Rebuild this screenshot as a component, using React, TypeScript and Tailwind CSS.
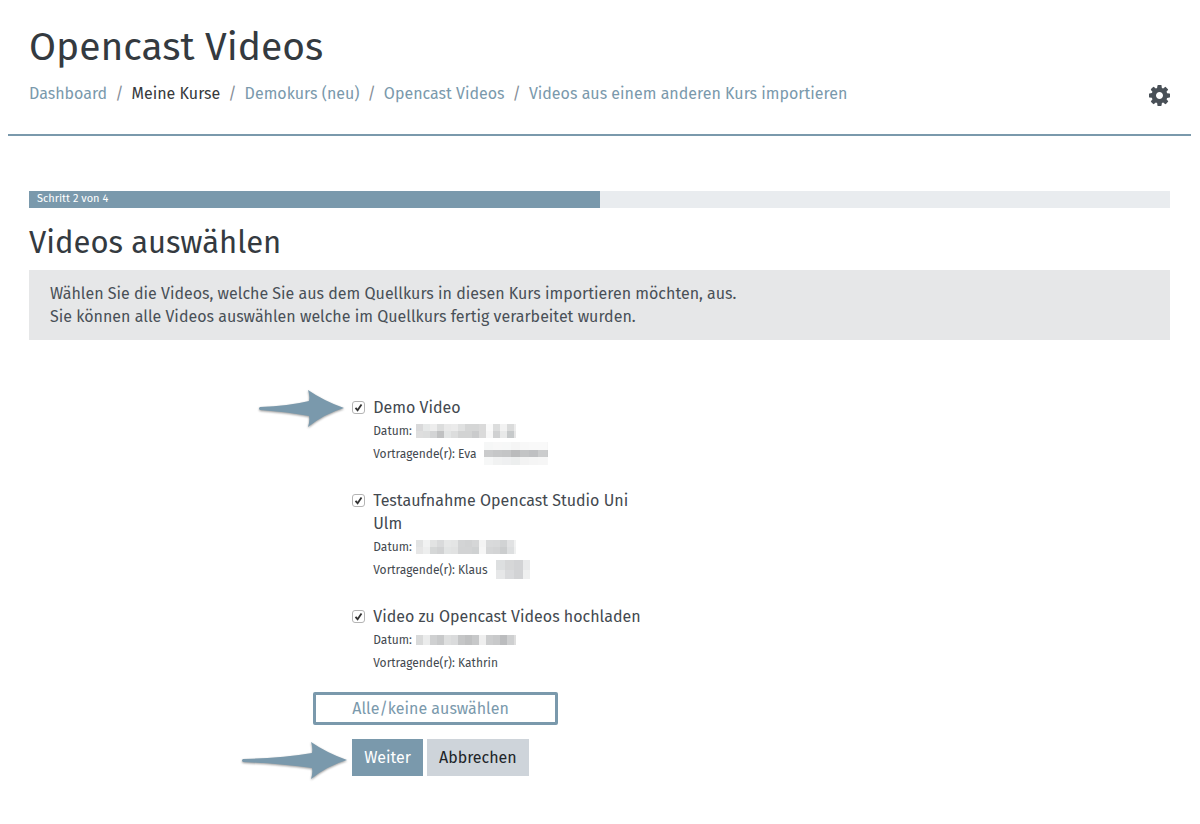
import { useState } from "react"

interface Mosaic {
  width: number
  height: number
  cell: number
  rows: string[][]
}

interface Video {
  id: string
  title: string
  presenter: string
  date: Mosaic
  surname?: Mosaic
}

const videos: Video[] = [
  {
    id: "demo",
    title: "Demo Video",
    presenter: "Eva",
    date: {
      width: 100,
      height: 14,
      cell: 7,
      rows: [
        ["#d9d9da", "#e6e8e8", "#ededed", "#dcdddd", "#e9e9e9", "#ebebeb", "#e0e1e1", "#d5d6d6", "#d5d6d6", "#dadada", "#fafafa", "#dcdddd", "#f2f2f2", "#dadbdb", "#ececec"],
        ["#dedede", "#dcdddd", "#d3d4d5", "#c0c1c2", "#e3e5e5", "#dcdddd", "#d2d3d3", "#d2d3d3", "#cacbcc", "#dadada", "#f7f7f7", "#d0d1d2", "#e8e9e9", "#c6c9ca", "#e6e6e6"],
      ],
    },
    surname: {
      width: 64,
      height: 23,
      cell: 9,
      rows: [
        ["#f6f7f7", "#f8f8f8", "#f7f8f8", "#f5f5f5", "#f8f8f8", "#f9f9f9", "#f9f9f9", "#f6f6f6"],
        ["#cacbcc", "#c6c7c8", "#c4c5c6", "#babbbc", "#c3c4c5", "#bfc0c2", "#cbcccd", "#c8c9ca"],
        ["#f6f7f7", "#f1f2f2", "#eff0f1", "#eceeee", "#f3f3f3", "#f5f5f5", "#f6f6f6", "#f7f7f7"],
      ],
    },
  },
  {
    id: "testaufnahme",
    title: "Testaufnahme Opencast Studio Uni Ulm",
    presenter: "Klaus",
    date: {
      width: 100,
      height: 14,
      cell: 7,
      rows: [
        ["#e2e3e3", "#f1f2f2", "#e2e3e3", "#d9dadb", "#e6e7e7", "#e4e5e5", "#d3d4d5", "#d1d2d3", "#d5d6d7", "#f4f4f4", "#d9dadb", "#d8d9da", "#d1d3d4", "#e1e2e3", "#f1f2f2"],
        ["#e6e6e6", "#edeeee", "#d5d7d7", "#d1d2d3", "#e2e4e4", "#e1e2e2", "#d2d3d4", "#d2d3d4", "#cfd1d2", "#f6f6f6", "#d5d6d7", "#d3d4d5", "#cbcdce", "#dddfe0", "#eff0f0"],
      ],
    },
    surname: {
      width: 34,
      height: 19,
      cell: 9,
      rows: [
        ["#dddfe0", "#d6d7d8", "#d2d3d5", "#e9eaeb"],
        ["#e6e7e8", "#d9dadc", "#d2d3d5", "#eff0f0"],
      ],
    },
  },
  {
    id: "hochladen",
    title: "Video zu Opencast Videos hochladen",
    presenter: "Kathrin",
    date: {
      width: 100,
      height: 10,
      cell: 7,
      rows: [
        ["#d9dada", "#ebecec", "#cfd0d1", "#c8c9ca", "#dedfdf", "#dadbdc", "#c5c6c7", "#bfc0c1", "#c7c8c9", "#efefef", "#cccdce", "#c8c9ca", "#bbbcbe", "#cecfd0", "#dedede"],
      ],
    },
  },
]

const crumbs = [
  { label: "Dashboard", link: true },
  { label: "Meine Kurse", link: false },
  { label: "Demokurs (neu)", link: true },
  { label: "Opencast Videos", link: true },
  { label: "Videos aus einem anderen Kurs importieren", link: true },
]

function Redacted({ mosaic }: { mosaic: Mosaic }) {
  const rowHeight = mosaic.height / mosaic.rows.length
  return (
    <svg width={mosaic.width} height={mosaic.height} aria-hidden="true" className="shrink-0" shapeRendering="crispEdges">
      {mosaic.rows.map((row, y) =>
        row.map((fill, x) => (
          <rect key={`${x}-${y}`} x={x * mosaic.cell} y={y * rowHeight} width={mosaic.cell} height={rowHeight} fill={fill} />
        ))
      )}
    </svg>
  )
}

// The head keeps its size, only the tail grows with the length
function Arrow({ length, className }: { length: number; className: string }) {
  const neck = length - 36
  const tail = neck * 0.6
  return (
    <svg width={length} height={37} aria-hidden="true" className={`pointer-events-none absolute overflow-visible drop-shadow-[0_1px_1px_rgba(0,0,0,0.4)] ${className}`}>
      <path
        d={`M1 17 Q${tail} 16 ${neck + 1} 11 Q${neck + 2} 6 ${neck} 0 Q${neck + 16} 11 ${length} 18 Q${neck + 16} 24 ${neck} 37 Q${neck + 2} 31 ${neck + 1} 26 Q${tail} 22 1 20 Q-1 18.500 1 17Z`}
        fill="#7a99ac"
      />
    </svg>
  )
}

function GearIcon() {
  return (
    <svg viewBox="0 0 1536 1536" className="size-[21px]" fill="#495057" aria-hidden="true">
      <path d="M1024 768q0-106-75-181t-181-75-181 75-75 181 75 181 181 75 181-75 75-181zm512-109v222q0 12-8 23t-20 13l-185 28q-19 54-39 91 35 50 107 138 10 12 10 25t-9 23q-27 37-99 108t-94 71q-12 0-26-9l-138-108q-44 23-91 38-16 136-29 186-7 28-36 28H657q-14 0-24.500-8.500T621 1506l-28-184q-49-16-90-37l-141 107q-10 9-25 9-14 0-25-11-126-114-165-168-7-10-7-23 0-12 8-23 15-21 51-66.500t54-70.500q-27-50-41-99L29 913q-13-2-21-12.500T0 877V655q0-12 8-23t19-13l186-28q14-46 39-92-40-57-107-138-10-12-10-24 0-10 9-23 26-36 98.500-107.500T337 135q13 0 26 10l138 107q44-23 91-38 16-136 29-186 7-28 36-28h222q14 0 24.500 8.500T915 30l28 184q49 16 90 37l142-107q9-9 24-9 13 0 25 10 129 119 165 170 7 8 7 22 0 12-8 23-15 21-51 66.500t-54 70.500q26 50 41 98l183 28q13 2 21 12.500t8 23.500z" />
    </svg>
  )
}

export default function App() {
  const [selected, setSelected] = useState<string[]>(videos.map((v) => v.id))

  const toggle = (id: string) => {
    setSelected(selected.includes(id) ? selected.filter((s) => s !== id) : [...selected, id])
  }

  const toggleAll = () => {
    setSelected(selected.length === videos.length ? [] : videos.map((v) => v.id))
  }

  return (
    <div className="bg-white px-2 pr-[9px] pb-12 font-['Fira_Sans','Noto_Sans',sans-serif] text-base leading-[23px] text-[#373a3c]">
      <header className="border-b-2 border-[#7a99ac] px-[21px] pt-[22px] pb-7">
        <h1 className="text-[39px] leading-[50px] text-[#343a40]">Opencast Videos</h1>
        <div className="mt-[9px] flex items-center justify-between">
          <nav aria-label="Navigationspfad">
            <ol className="flex flex-wrap">
              {crumbs.map((crumb, i) => (
                <li key={crumb.label} className="flex">
                  {i > 0 && <span className="px-2 text-[#868e96]">/</span>}
                  {crumb.link ? (
                    <a href="#" className="text-[#7a99ac]">
                      {crumb.label}
                    </a>
                  ) : (
                    <span>{crumb.label}</span>
                  )}
                </li>
              ))}
            </ol>
          </nav>
          <button type="button" aria-label="Einstellungen" className="pt-1">
            <GearIcon />
          </button>
        </div>
      </header>

      <main className="px-[21px] pt-[55px]">
        <div className="h-[17px] bg-[#e9ecef]">
          <div className="h-full w-1/2 bg-[#7a99ac] pl-2 text-[11px] leading-4 text-white">Schritt 2 von 4</div>
        </div>

        <h2 className="mt-4 mb-2 text-[31px] leading-[38px] text-[#343a40]">Videos auswählen</h2>

        <div className="bg-[#e6e7e8] px-[21px] py-3 text-[#495057]">
          <p>Wählen Sie die Videos, welche Sie aus dem Quellkurs in diesen Kurs importieren möchten, aus.</p>
          <p>Sie können alle Videos auswählen welche im Quellkurs fertig verarbeitet wurden.</p>
        </div>

        <form className="mt-14 ml-[25%] pl-[38px]" onSubmit={(e) => e.preventDefault()}>
          <ul className="flex max-w-[290px] flex-col gap-6 text-[#43494f]">
            {videos.map((video, i) => (
              <li key={video.id} className="relative flex items-start gap-2">
                {i === 0 && <Arrow length={85} className="top-[-6px] right-full mr-2" />}
                <span className="grid h-[23px] shrink-0 place-items-center">
                  <input
                    id={video.id}
                    type="checkbox"
                    checked={selected.includes(video.id)}
                    onChange={() => toggle(video.id)}
                    className="peer col-start-1 row-start-1 size-[13px] appearance-none rounded-[3px] border border-[#b4b4b4] bg-white"
                  />
                  <svg viewBox="0 0 13 13" className="pointer-events-none invisible col-start-1 row-start-1 size-[13px] peer-checked:visible" aria-hidden="true">
                    <path d="M3.500 6.800 5.600 9.200 9.500 3.500" fill="none" stroke="#333" strokeWidth="1.800" />
                  </svg>
                </span>
                <div className="min-w-0">
                  <label htmlFor={video.id} className="block">
                    {video.title}
                  </label>
                  <div className="flex h-[23px] items-center gap-1 text-xs">
                    Datum: <Redacted mosaic={video.date} />
                  </div>
                  <div className="flex h-[23px] items-center gap-2 text-xs">
                    Vortragende(r): {video.presenter}
                    {video.surname && <Redacted mosaic={video.surname} />}
                  </div>
                </div>
              </li>
            ))}
          </ul>

          <button type="button" onClick={toggleAll} className="mt-[18px] -ml-[39px] block h-[33px] w-[245px] rounded-[2px] border-3 border-[#7a99ac] pl-9 text-left text-[#7a99ac]">
            Alle/keine auswählen
          </button>

          <div className="relative mt-[14px] flex gap-1">
            <Arrow length={105} className="top-[3px] right-full mr-[5px]" />
            <button type="submit" className="h-[37px] bg-[#7a99ac] px-3 text-white">
              Weiter
            </button>
            <button type="button" className="h-[37px] bg-[#ced4da] px-3 text-[#212529]">
              Abbrechen
            </button>
          </div>
        </form>
      </main>
    </div>
  )
}
